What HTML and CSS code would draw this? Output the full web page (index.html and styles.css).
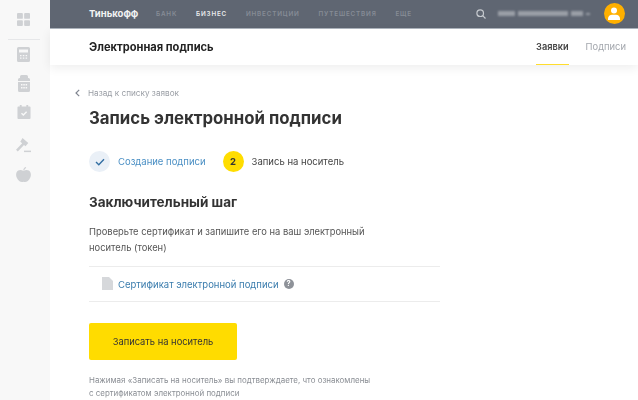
FILE: index.html
```html
<!DOCTYPE html>
<html lang="ru">
<head>
<meta charset="utf-8">
<title>Электронная подпись</title>
<link rel="stylesheet" href="styles.css">
</head>
<body>
<div class="app">
  <aside class="sidebar">
    <svg class="side-icon grid-icon" width="13" height="13" viewBox="0 0 14 14"><rect width="6.300" height="6.300" rx="1"/><rect x="7.700" width="6.300" height="6.300" rx="1"/><rect y="7.700" width="6.300" height="6.300" rx="1"/><rect x="7.700" y="7.700" width="6.300" height="6.300" rx="1"/></svg>
    <div class="side-rule"></div>
    <svg class="side-icon calc-icon" width="13" height="15" viewBox="0 0 13 15"><path d="M1.500 0h10A1.500 1.500 0 0 1 13 1.500v12a1.500 1.500 0 0 1-1.500 1.500h-10A1.500 1.500 0 0 1 0 13.500v-12A1.500 1.500 0 0 1 1.500 0z"/><path class="cut" d="M2 2.500h9v3H2zM3 8h1.500v1.200H3zM5.800 8h1.500v1.200H5.800zM8.600 8h1.500v1.200H8.600zM3 10.500h1.500v1.200H3zM5.800 10.500h1.500v1.200H5.800zM8.600 10.500h1.500v1.200H8.600z"/></svg>
    <svg class="side-icon pos-icon" width="12" height="17" viewBox="0 0 12 17"><path d="M3.500 0h5A1.500 1.500 0 0 1 10 1.500V3h.5A1.500 1.500 0 0 1 12 4.500v11a1.500 1.500 0 0 1-1.500 1.500h-9A1.500 1.500 0 0 1 0 15.500v-11A1.500 1.500 0 0 1 1.500 3H2V1.500A1.500 1.500 0 0 1 3.500 0z"/><path class="cut" d="M0 6h12v1H0zM3 9h1.500v1.500H3zM5.300 9h1.500v1.500H5.300zM7.600 9h1.500v1.500H7.600zM3 12h1.500v1.500H3zM5.300 12h1.500v1.500H5.300zM7.600 12h1.500v1.500H7.600z"/></svg>
    <svg class="side-icon cal-icon" width="14" height="14" viewBox="0 0 14 15"><path d="M2.500 0h2v1.500h5V0h2v1.500H13a1 1 0 0 1 1 1V14a1 1 0 0 1-1 1H1a1 1 0 0 1-1-1V2.500a1 1 0 0 1 1-1h1.500z"/><path class="cut-line" d="M4.300 8.800l2 2 3.500-3.600"/></svg>
    <svg class="side-icon gavel-icon" width="15" height="15" viewBox="0 0 15 15"><path d="M6.500 0l5.800 5-2.800 3.200-1.500-1.300L1.800 13.500 0 11.800l6.200-6.500-1.900-1.600z"/><rect x="8" y="12.600" width="7" height="1.500"/></svg>
    <svg class="side-icon apple-icon" width="15" height="15" viewBox="0 0 15 15"><path d="M7.500 4C9 3 11 2.500 12.800 3.500 15 5 15.400 8 14.300 10.500 13 13.500 10.800 15 9 15c-.7 0-1-.3-1.500-.3S6.700 15 6 15C4.200 15 2 13.500.7 10.500-.4 8 0 5 2.200 3.500 4 2.500 6 3 7.500 4z"/><path d="M7.200 3.500C7.200 2 8 .6 9.800 0l.4 1C9 1.500 8.400 2.400 8.400 3.500z"/></svg>
  </aside>
  <div class="main">
    <header class="topbar">
      <span class="brand">Тинькофф</span>
      <nav class="topnav">
        <span class="nav-item">БАНК</span>
        <span class="nav-item nav-active">БИЗНЕС</span>
        <span class="nav-item">ИНВЕСТИЦИИ</span>
        <span class="nav-item">ПУТЕШЕСТВИЯ</span>
        <span class="nav-item">ЕЩЕ</span>
      </nav>
      <svg class="search" width="10" height="10" viewBox="0 0 10 10"><circle cx="4.200" cy="4.200" r="3.300"/><path d="M6.700 6.700L9.500 9.500"/></svg>
      <div class="account" aria-hidden="true">
        <i class="blot w1"></i><i class="blot w2"></i><i class="blot w3"></i><i class="blot w4"></i>
      </div>
      <div class="avatar">
        <svg width="12" height="13" viewBox="0 0 12 13"><circle cx="6" cy="3.400" r="3"/><path d="M0 13v-1.500C0 9 2 7.700 4 7.700h4c2 0 4 1.300 4 3.800V13z"/></svg>
      </div>
    </header>
    <div class="subbar">
      <span class="sub-title">Электронная подпись</span>
      <div class="tabs">
        <span class="tab tab-active">Заявки</span>
        <span class="tab">Подписи</span>
      </div>
    </div>
    <main class="content">
      <a class="back"><svg width="5" height="8" viewBox="0 0 5 8"><path d="M4.200.8L1 4l3.200 3.200"/></svg><span>Назад к списку заявок</span></a>
      <h1 class="title">Запись электронной подписи</h1>
      <div class="steps">
        <div class="step">
          <span class="step-badge badge-done"><svg width="10" height="8" viewBox="0 0 10 8"><path d="M1 4l2.800 2.700L9 1.300"/></svg></span>
          <span class="step-link">Создание подписи</span>
        </div>
        <div class="step">
          <span class="step-badge badge-current">2</span>
          <span class="step-text">Запись на носитель</span>
        </div>
      </div>
      <h2 class="subtitle">Заключительный шаг</h2>
      <p class="desc">Проверьте сертификат и запишите его на ваш электронный носитель (токен)</p>
      <div class="file-row">
        <svg class="file-icon" width="11" height="13" viewBox="0 0 11 13"><path d="M0 0h7l4 4v9H0z"/></svg>
        <span class="file-link">Сертификат электронной подписи</span>
        <span class="help">?</span>
      </div>
      <button class="primary">Записать на носитель</button>
      <p class="note">Нажимая «Записать на носитель» вы подтверждаете, что ознакомлены с сертификатом электронной подписи</p>
    </main>
  </div>
</div>
</body>
</html>
```

FILE: styles.css
```css
* { box-sizing: border-box; }
html, body { margin: 0; height: 100%; overflow: hidden; background: #fff; }
body { font-family: Inter, "Noto Sans", sans-serif; color: #333; }
.app { display: flex; width: 638px; height: 400px; overflow: hidden; filter: blur(0.5px); }

.sidebar { width: 50px; flex: none; background: #f8f8f8; display: flex; flex-direction: column; align-items: center; padding: 13px 3px 0 0; }
.side-icon { fill: #cfd1d4; display: block; flex: none; }
.side-icon .cut { fill: #f8f8f8; }
.side-icon .cut-line { fill: none; stroke: #f8f8f8; stroke-width: 1.500; }
.side-rule { width: 32px; height: 1px; background: #e6e7e9; margin: 13px 0 7px; }
.pos-icon { margin-top: 13px; }
.cal-icon { margin-top: 13px; }
.gavel-icon { margin-top: 19px; }
.apple-icon { margin-top: 14px; }

.main { flex: 1; min-width: 0; display: flex; flex-direction: column; }
.topbar { height: 29px; flex: none; background: #5f6672; border-bottom: 1px solid #aeb5be; display: flex; align-items: center; padding-left: 39px; }
.brand { color: #f2f3f4; font-size: 9.500px; font-weight: 700; width: 67px; flex: none; margin-top: -2px; }
.topnav { display: flex; gap: 18.800px; margin-top: -1px; }
.nav-item { color: #868c96; font-size: 6.300px; font-weight: 600; letter-spacing: 0.850px; white-space: nowrap; }
.nav-active { color: #e9ebed; }
.search { margin-left: 64px; margin-top: -1px; flex: none; fill: none; stroke: #c5c9ce; stroke-width: 1.200; }
.account { margin-left: 12px; width: 97px; display: flex; gap: 3px; align-items: center; flex: none; margin-top: -1px; }
.blot { display: block; height: 5px; background: #9a9fa7; filter: blur(0.8px); }
.w1 { width: 17px; }
.w2 { width: 50px; }
.w3 { width: 12px; }
.w4 { width: 4px; height: 2px; }
.avatar { width: 21px; height: 21px; border-radius: 50%; background: #ffb000; margin-left: 9px; flex: none; display: flex; align-items: center; justify-content: center; margin-top: -2px; }
.avatar svg { fill: #fff; }

.subbar { height: 36px; flex: none; background: #fff; display: flex; align-items: stretch; justify-content: space-between; padding: 0 12px 0 39px; box-shadow: 0 3px 10px rgba(0, 0, 0, 0.07); position: relative; }
.sub-title { font-size: 11.100px; font-weight: 700; color: #222; line-height: 36px; }
.tabs { display: flex; gap: 17px; }
.tab { font-size: 9.400px; color: #a3a7ad; line-height: 36px; }
.tab-active { color: #444; font-size: 9.200px; font-weight: 600; box-shadow: inset 0 -1px 0 #ffdd2d; }

.content { flex: 1; padding: 22px 0 0 39px; }
.back { display: flex; align-items: center; gap: 8px; margin-left: -14px; font-size: 8.200px; color: #9a9ea5; height: 12px; }
.back svg { fill: none; stroke: #808590; stroke-width: 1.200; flex: none; }
.title { margin: 7px 0 0; font-size: 16.800px; line-height: 24px; font-weight: 700; color: #333; white-space: nowrap; }
.steps { display: flex; align-items: center; gap: 17px; margin-top: 21px; }
.step { display: flex; align-items: center; gap: 8px; }
.step-badge { width: 21px; height: 21px; border-radius: 50%; display: flex; align-items: center; justify-content: center; flex: none; font-size: 9.500px; font-weight: 700; color: #333; }
.badge-done { background: #eaf0f7; }
.badge-done svg { fill: none; stroke: #336fa3; stroke-width: 1.400; }
.badge-current { background: #ffdd00; }
.step-link { font-size: 9.500px; color: #4a8fc4; white-space: nowrap; }
.step-text { font-size: 9.500px; color: #444; white-space: nowrap; }
.subtitle { margin: 20px 0 0; font-size: 13.500px; line-height: 20px; font-weight: 700; color: #333; }
.desc { margin: 12px 0 0; width: 300px; font-size: 9.400px; line-height: 16px; color: #555; }
.file-row { width: 351px; height: 36px; margin-top: 10px; border-top: 1px solid #ececec; border-bottom: 1px solid #ececec; display: flex; align-items: center; padding-left: 13px; }
.file-icon { fill: #d6d8db; flex: none; margin-top: -2px; }
.file-link { font-size: 9.500px; color: #3a7cad; margin-left: 5px; white-space: nowrap; }
.help { width: 10px; height: 10px; border-radius: 50%; background: #8e9299; color: #fff; font-size: 7.500px; font-weight: 700; line-height: 10px; text-align: center; margin-left: 5px; flex: none; }
.primary { display: block; width: 148px; height: 37px; margin-top: 21px; background: #ffdc00; border: 0; border-radius: 2px; font: inherit; font-size: 9.350px; color: #333; padding: 0; }
.note { margin: 14px 0 0; width: 285px; font-size: 7.950px; line-height: 13px; color: #8a8e94; }
```
